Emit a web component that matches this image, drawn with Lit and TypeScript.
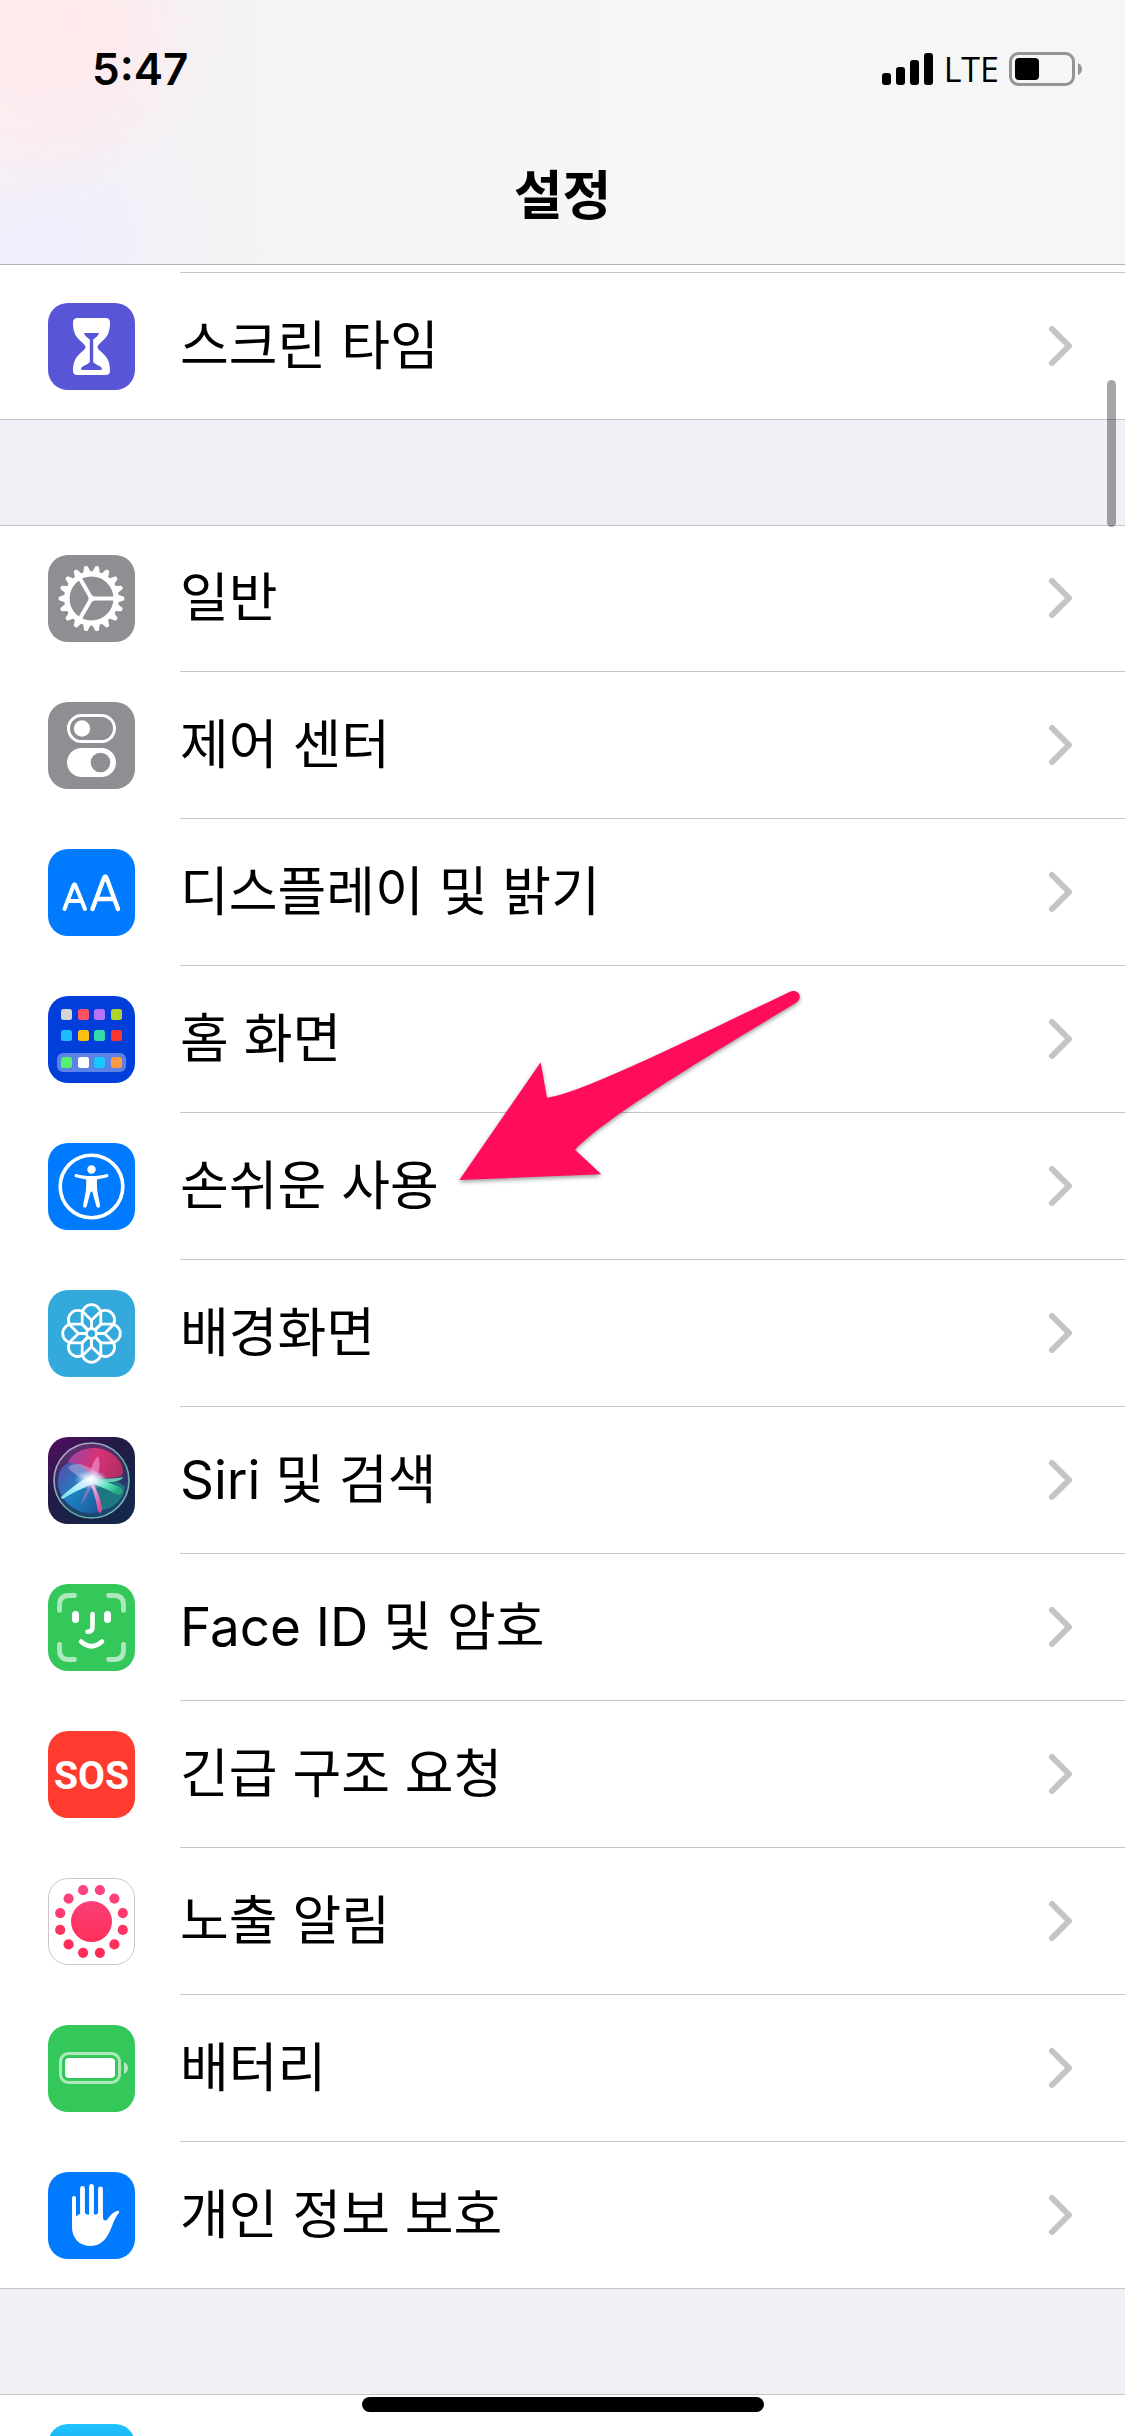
import { LitElement, html, svg, css } from "lit";
import { customElement, property } from "lit/decorators.js";

const polar = (cx: number, cy: number, r: number, deg: number) => {
  const a = (deg * Math.PI) / 180;
  return [cx + r * Math.cos(a), cy + r * Math.sin(a)];
};

const range = (n: number) => Array.from({ length: n }, (_, i) => i);

const homeDots: Array<[number, number, string]> = [
  [13, 13, "#d3d5d2"], [30, 13, "#ff5263"], [46, 13, "#b973fb"], [63, 13, "#b1d52f"],
  [13, 34, "#1cbcfe"], [30, 34, "#fdc010"], [46, 34, "#34dba6"], [63, 34, "#fb352f"],
  [13, 61, "#54f171"], [30, 61, "#ffffff"], [46, 61, "#16c8fd"], [63, 61, "#fd9941"],
];

const icons: Record<string, unknown> = {
  hourglass: svg`
    <rect width="87" height="87" rx="20" fill="#5856d6"/>
    <path fill="#fff" d="M29.500 15H57.500Q62 15 62 19.500C62 29 59.500 33.500 54.500 38C51 41.200 49.500 42.500 49.500 44C49.500 45.800 51 47 54.500 50C59.500 54.500 62 59 62 68Q62 72 57.500 72H29.500Q25 72 25 68C25 59 27.500 54.500 32.500 50C36 47 37.500 45.800 37.500 44C37.500 42.500 36 41.200 32.500 38C27.500 33.500 25 29 25 19.500Q25 15 29.500 15Z"/>
    <path fill="#5856d6" d="M36 30H51C50.500 32.500 48 34.500 45.200 36.500V59C46 61 54 63.500 54 65.500Q54 67 52.500 67H34.500Q33 67 33 65.500C33 63.500 41 61 41.800 59V36.500C39 34.500 36.500 32.500 36 30Z"/>`,
  gear: svg`
    <rect width="87" height="87" rx="20" fill="#8e8e93"/>
    ${range(18).map(
      (i) => svg`<path fill="#fff" transform=${`rotate(${i * 20} 43.5 43.5)`}
        d="M69.500 39.600L76 41.700Q77 43.500 76 45.300L69.500 47.400Z"/>`
    )}
    <circle cx="43.500" cy="43.500" r="24.600" fill="none" stroke="#fff" stroke-width="5.400"/>
    <path fill="none" stroke="#fff" stroke-width="4" d="M43.500 43.500H67M43.500 43.500L31.700 23M43.500 43.500L31.700 64"/>
    <circle cx="43.500" cy="43.500" r="3" fill="#fff"/>`,
  toggles: svg`
    <rect width="87" height="87" rx="20" fill="#8e8e93"/>
    <rect x="20.500" y="13.500" width="46" height="26" rx="13" fill="none" stroke="#fff" stroke-width="3"/>
    <circle cx="34" cy="26.500" r="8.200" fill="#fff"/>
    <rect x="19" y="46" width="49" height="29" rx="14.500" fill="#fff"/>
    <circle cx="52.500" cy="60.500" r="9.800" fill="#8e8e93"/>`,
  display: svg`
    <rect width="87" height="87" rx="20" fill="#007aff"/>
    <path fill="none" stroke="#fff" stroke-width="4" stroke-linecap="round" stroke-linejoin="round"
      d="M16.500 60L25.500 36.500Q26.500 34 27.500 36.500L37 60M20 52H33.500"/>
    <path fill="none" stroke="#fff" stroke-width="4.400" stroke-linecap="round" stroke-linejoin="round"
      d="M44.500 60L56 29Q57.300 26 58.600 29L70 60M48.500 50H66"/>`,
  home: svg`
    <rect width="87" height="87" rx="20" fill="#023fda"/>
    <rect x="9" y="57" width="69" height="19" rx="6" fill="#5b82e6"/>
    ${homeDots.map(([x, y, c]) => svg`<rect x=${x} y=${y} width="11" height="11" rx="2.500" fill=${c}/>`)}`,
  accessibility: svg`
    <rect width="87" height="87" rx="20" fill="#007aff"/>
    <circle cx="43.500" cy="43.500" r="31.300" fill="none" stroke="#fff" stroke-width="3.600"/>
    <circle cx="43.500" cy="26.500" r="4.200" fill="#fff"/>
    <path fill="#fff" d="M28.300 31C33 32.500 38 33 43.500 33S54 32.500 58.700 31C60.500 30.600 61 33.700 59.300 34.200L49 36.500V44C49 50 51.500 56 52 63C52 65 49 65.400 48.300 63.300L44.600 49.500Q43.500 47.500 42.400 49.500L38.700 63.300C38 65.400 35 65 35.200 63C35.700 56 38.200 50 38.200 44V36.500L27.700 34.200C26 33.700 26.500 30.600 28.300 31Z"/>`,
  wallpaper: svg`
    <rect width="87" height="87" rx="20" fill="#34aadc"/>
    <g fill="none" stroke="#fff" stroke-width="2.800" stroke-linejoin="round">
      ${range(8).map(
        (i) => svg`<path transform=${`rotate(${i * 45} 43.5 43.5)`}
          d="M39.900 39.900L34.200 34.200V24A9.300 9.300 0 0 1 52.800 24V34.200L47.100 39.900"/>`
      )}
      <circle cx="43.500" cy="43.500" r="5"/>
    </g>`,
  siri: svg`
    <defs>
      <linearGradient id="sbg" x1="0" y1="0" x2=".8" y2="1">
        <stop offset="0" stop-color="#540e62"/><stop offset=".45" stop-color="#221b45"/><stop offset="1" stop-color="#12284a"/>
      </linearGradient>
      <linearGradient id="sdisc" x1=".3" y1="0" x2=".5" y2="1">
        <stop offset="0" stop-color="#6b2c6c"/><stop offset=".4" stop-color="#3a2c66"/><stop offset="1" stop-color="#174a70"/>
      </linearGradient>
      <linearGradient id="srim" x1="0" y1="0" x2="1" y2="1">
        <stop offset="0" stop-color="#c4a6d8"/><stop offset=".6" stop-color="#5caea0"/><stop offset="1" stop-color="#8fb9d8"/>
      </linearGradient>
      <linearGradient id="spink" x1="0" y1=".3" x2="1" y2=".5">
        <stop offset="0" stop-color="#9a45a8"/><stop offset=".5" stop-color="#d83176"/><stop offset="1" stop-color="#b03062"/>
      </linearGradient>
      <linearGradient id="sblue" x1="0" y1="0" x2="1" y2="1">
        <stop offset="0" stop-color="#5a4aa8"/><stop offset=".5" stop-color="#1c82c2"/><stop offset="1" stop-color="#1d5596"/>
      </linearGradient>
      <radialGradient id="sglow">
        <stop offset="0" stop-color="#fff"/><stop offset=".35" stop-color="#e6f4ff" stop-opacity=".85"/><stop offset="1" stop-color="#b8d0ff" stop-opacity="0"/>
      </radialGradient>
      <linearGradient id="sgreen" x1="0" y1="0" x2="1" y2=".5">
        <stop offset="0" stop-color="#f2fffb"/><stop offset=".6" stop-color="#5fe6bd"/><stop offset="1" stop-color="#23a87c"/>
      </linearGradient>
      <linearGradient id="smag" x1="0" y1="0" x2=".5" y2="1">
        <stop offset="0" stop-color="#f8e2fa"/><stop offset="1" stop-color="#dd4f9c"/>
      </linearGradient>
      <linearGradient id="sarm" x1="1" y1="0" x2="0" y2="1">
        <stop offset="0" stop-color="#fff"/><stop offset="1" stop-color="#6fe0ee"/>
      </linearGradient>
    </defs>
    <rect width="87" height="87" rx="20" fill="url(#sbg)"/>
    <circle cx="43.500" cy="43.500" r="37.500" fill="url(#sdisc)" stroke="url(#srim)" stroke-width="1.600"/>
    <path fill="url(#spink)" d="M20 25C26 13 43 8 57 13C68 17 76 27 75 36C74 42 60 40 44 43C38 38 26 35 20 25Z"/>
    <path fill="url(#sblue)" d="M10 48C9 36 14 27 22 26C33 26 41 34 44 43C50 52 56 62 52 74C40 81 14 72 10 48Z"/>
    <path fill="#1d9088" opacity=".7" d="M44 43C56 40 70 42 77 50C76 61 67 71 54 73C53 60 50 52 44 43Z"/>
    <path fill="#d4bef0" opacity=".45" d="M20 30C30 23 42 29 56 41L44 43C36 42 27 40 20 30Z"/>
    <path fill="#f0a0d4" opacity=".6" d="M50 19C53 28 52 38 44 44C40 36 44 26 50 19Z"/>
    <path fill="url(#smag)" d="M40 41C46 44 52 60 54 70C54.500 77 50.500 78 49.500 72C48 62 45 52 40 41Z"/>
    <path fill="#e673b8" opacity=".5" d="M43 43C39 51 35 60 33 68C37 62 42 54 45 46Z"/>
    <path fill="url(#sarm)" d="M46 38C37 40 24 50 13 60C13 62 15 62.500 16 61.500C27 54 38 50 47 46Z"/>
    <path fill="url(#sgreen)" d="M42 39C53 43 66 47 73 51C77 55 73 60 67 56.500C59 52 51 49 43 46Z"/>
    <path fill="#6fe0bd" opacity=".85" d="M44 41C54 42 66 42 75 40C73 46 60 45 44 45Z"/>
    <ellipse cx="43" cy="42.500" rx="17" ry="10" fill="url(#sglow)"/>`,
  face: svg`
    <rect width="87" height="87" rx="20" fill="#34c759"/>
    <g fill="none" stroke-linecap="round" stroke-linejoin="round">
      <path stroke="#aee9bd" stroke-width="4.800" d="M11.500 26.500V21Q11.500 11.500 21 11.500H26.500M60.500 11.500H66Q75.500 11.500 75.500 21V26.500M75.500 60.500V66Q75.500 75.500 66 75.500H60.500M26.500 75.500H21Q11.500 75.500 11.500 66V60.500"/>
      <path stroke="#fff" stroke-width="7" d="M27.500 30.500V35.500M59.500 30.500V35.500"/>
      <path stroke="#fff" stroke-width="4.600" d="M44.500 30V43.500Q44.500 47.800 39.500 47.800M33 57.500Q43.500 67 54 57.500"/>
    </g>`,
  sos: svg`
    <rect width="87" height="87" rx="20" fill="#ff3b30"/>
    <text x="43.500" y="58" text-anchor="middle" class="sos">SOS</text>`,
  exposure: svg`
    <defs>
      <linearGradient id="exp" gradientUnits="userSpaceOnUse" x1="0" y1="8" x2="0" y2="70">
        <stop offset="0" stop-color="#fb4583"/><stop offset="1" stop-color="#fe2d55"/>
      </linearGradient>
    </defs>
    <rect x=".5" y=".5" width="86" height="86" rx="19.500" fill="#fff" stroke="#c8c8cc"/>
    <circle cx="43.500" cy="43.500" r="20.500" fill="url(#exp)"/>
    ${range(12).map((i) => {
      const [x, y] = polar(43.5, 43.5, 32.4, 15 + i * 30);
      return svg`<circle cx=${x.toFixed(1)} cy=${y.toFixed(1)} r="5.100" fill="url(#exp)"/>`;
    })}`,
  battery: svg`
    <rect width="87" height="87" rx="20" fill="#34c759"/>
    <rect x="12.500" y="28.500" width="59" height="29" rx="8" fill="none" stroke="#aee9bd" stroke-width="3"/>
    <rect x="17" y="33" width="50" height="20" rx="4" fill="#fff"/>
    <path fill="#aee9bd" d="M76 37Q80 39 80 43T76 49Z"/>`,
  hand: svg`
    <rect width="87" height="87" rx="20" fill="#007aff"/>
    <path fill="none" stroke="#fff" stroke-width="4.800" stroke-linecap="round" d="M34.500 47V16.500M43.500 47V14.500M52.500 47V17"/>
    <path fill="none" stroke="#fff" stroke-width="4" stroke-linecap="round" d="M26 50V26"/>
    <path fill="#fff" d="M24 42Q26 44.500 28 44Q30 44 31 42Q33.500 44 37 41Q40 44.500 44 41Q47 44 50.500 41L54.900 42V46Q55.500 49 58 48.500C60.500 47.500 63 40 70 38.800Q72 39 70.800 41C68 44 66.500 48 64 54C60 65 54 74 43 74C31 74 24 66 24 55Z"/>`,
  appstore: svg`
    <defs>
      <linearGradient id="app" x1="0" y1="0" x2="0" y2="1">
        <stop offset="0" stop-color="#1fc4fb"/><stop offset="1" stop-color="#1d70f2"/>
      </linearGradient>
    </defs>
    <rect width="87" height="87" rx="20" fill="url(#app)"/>`,
};

@customElement("settings-row")
class SettingsRow extends LitElement {
  @property() icon = "";
  @property() label = "";
  @property({ type: Boolean, reflect: true }) last = false;

  static styles = css`
    :host { display: block; }
    .row {
      display: flex;
      color: #000;
      text-decoration: none;
    }
    .icon {
      flex: none;
      width: 87px;
      height: 87px;
      margin: 30px 45px 30px 48px;
    }
    .sos {
      font: 700 39px "Roboto", "Liberation Sans", sans-serif;
      fill: #fff;
    }
    .body {
      flex: 1;
      display: flex;
      align-items: center;
      justify-content: space-between;
      padding-right: 49px;
      border-bottom: 1px solid #c6c6c8;
    }
    :host([last]) .body { border-bottom-color: transparent; }
    .label {
      font-size: 53px;
      line-height: 80px;
      white-space: nowrap;
    }
    .chevron { width: 30px; height: 46px; }
  `;

  render() {
    return html`<a class="row" href="#">
      <svg class="icon" viewBox="0 0 87 87" aria-hidden="true">${icons[this.icon]}</svg>
      <span class="body">
        <span class="label">${this.label}</span>
        <svg class="chevron" viewBox="0 0 30 46" aria-hidden="true">
          <path d="M6 6L23 23L6 40" fill="none" stroke="#c4c4c6" stroke-width="6" stroke-linecap="round" stroke-linejoin="round"/>
        </svg>
      </span>
    </a>`;
  }
}

const groups = [
  [["hourglass", "스크린 타임"]],
  [
    ["gear", "일반"],
    ["toggles", "제어 센터"],
    ["display", "디스플레이 및 밝기"],
    ["home", "홈 화면"],
    ["accessibility", "손쉬운 사용"],
    ["wallpaper", "배경화면"],
    ["siri", "Siri 및 검색"],
    ["face", "Face ID 및 암호"],
    ["sos", "긴급 구조 요청"],
    ["exposure", "노출 알림"],
    ["battery", "배터리"],
    ["hand", "개인 정보 보호"],
  ],
  [["appstore", ""]],
];

@customElement("app-root")
class AppRoot extends LitElement {
  static styles = css`
    :host {
      display: flex;
      flex-direction: column;
      position: relative;
      height: 100vh;
      overflow: hidden;
      background: #f0f0f6;
      color: #000;
      font-family: "Inter", "Noto Sans CJK KR", sans-serif;
    }
    .header {
      flex: none;
      border-bottom: 1px solid #b2b2b4;
      background:
        radial-gradient(circle at 70px 20px, #ffe8ec 0, #ffe8ec00 170px),
        radial-gradient(circle at 0 70px, #fdeef0 0, #fdeef000 180px),
        radial-gradient(circle at 40px 240px, #eeeefe 0, #eeeefe00 190px),
        linear-gradient(90deg, #f2f2f3, #f6f6f6 55%, #f6f6f7);
    }
    .status {
      display: flex;
      align-items: center;
      justify-content: space-between;
      height: 132px;
      padding: 6px 43px 0 92px;
      box-sizing: border-box;
    }
    .time { font-size: 44px; font-weight: 600; line-height: 54px; }
    .signals { display: flex; align-items: center; gap: 10px; }
    .bars { width: 52px; height: 32px; }
    .network { font: 400 34px/44px "Open Sans", "Noto Sans", sans-serif; }
    .power { width: 73px; height: 34px; }
    .title {
      margin: 0;
      height: 132px;
      padding-top: 24px;
      box-sizing: border-box;
      font-size: 53px;
      font-weight: 600;
      line-height: 80px;
      text-align: center;
    }
    .list { flex: none; }
    .tail {
      padding-left: 180px;
      background: #fff;
    }
    .tail::after {
      content: "";
      display: block;
      height: 7px;
      border-bottom: 1px solid #c6c6c8;
    }
    .group {
      margin-bottom: 105px;
      background: #fff;
      box-shadow: inset 0 1px #c6c6c8, inset 0 -1px #c6c6c8;
    }
    .tail + .group { box-shadow: inset 0 -1px #c6c6c8; }
    .scroll {
      position: absolute;
      top: 380px;
      right: 9px;
      width: 9px;
      height: 147px;
      border-radius: 5px;
      background: #00000059;
    }
    .indicator {
      position: absolute;
      bottom: 24px;
      left: 50%;
      width: 402px;
      height: 15px;
      margin-left: -201px;
      border-radius: 8px;
      background: #000;
    }
    .arrow {
      position: absolute;
      top: 960px;
      left: 440px;
      width: 400px;
      height: 260px;
      filter: drop-shadow(0 2px 2px #00000066);
      pointer-events: none;
    }
  `;

  render() {
    return html`
      <header class="header">
        <div class="status">
          <span class="time">5:47</span>
          <div class="signals">
            <svg class="bars" viewBox="0 0 52 32" role="img" aria-label="signal">
              <rect x="0" y="20" width="9" height="12" rx="3"/>
              <rect x="14" y="14" width="9" height="18" rx="3"/>
              <rect x="28" y="7" width="9" height="25" rx="3"/>
              <rect x="42" y="0" width="9" height="32" rx="3"/>
            </svg>
            <span class="network">LTE</span>
            <svg class="power" viewBox="0 0 73 34" role="img" aria-label="battery">
              <rect x="1.500" y="1.500" width="63" height="31" rx="8" fill="none" stroke="#949494" stroke-width="3"/>
              <rect x="6" y="6" width="24" height="22" rx="4"/>
              <path fill="#949494" d="M69 11Q73 13 73 17T69 23Z"/>
            </svg>
          </div>
        </div>
        <h1 class="title">설정</h1>
      </header>
      <main class="list">
        <div class="tail"></div>
        ${groups.map(
          (rows) => html`<section class="group">
            ${rows.map(
              ([icon, label], i) =>
                html`<settings-row .icon=${icon} .label=${label} ?last=${i === rows.length - 1}></settings-row>`
            )}
          </section>`
        )}
      </main>
      <svg class="arrow" viewBox="0 0 1200 780" aria-hidden="true">
        <path fill="#ff0d5b" d="M58 660L302 307L321 413C420 400 700 262 1050 95C1070 88 1084 103 1078 117Q1075 125 1066 130C800 290 500 470 405 569L484 643Z"/>
      </svg>
      <div class="scroll"></div>
      <div class="indicator"></div>
    `;
  }
}
